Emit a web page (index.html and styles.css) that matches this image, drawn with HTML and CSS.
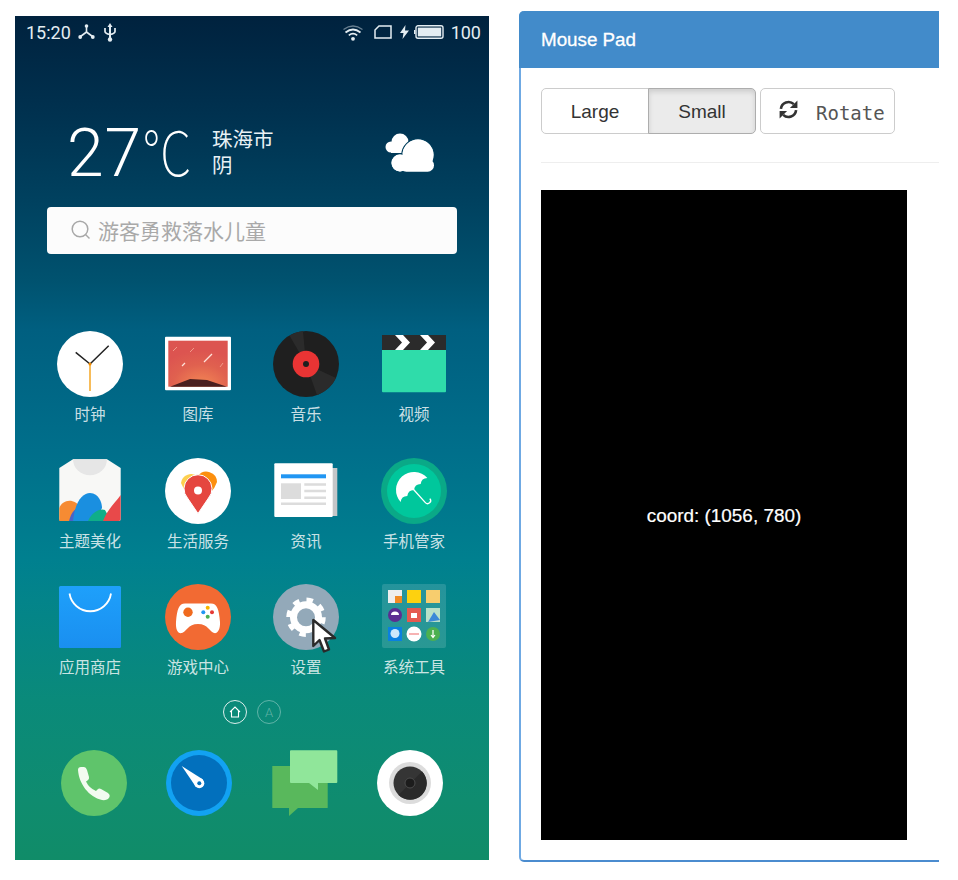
FILE: index.html
```html
<!DOCTYPE html>
<html>
<head>
<meta charset="UTF-8">
<title>Mouse Pad</title>
<link rel="stylesheet" href="styles.css">
</head>
<body>
<div class="phone">
  <div class="status">
    <div class="status-group">
      <span class="status-time">15:20</span>
      <svg class="st-node" viewBox="0 0 17 16"><path d="M8.5 2V8L2.5 12.5M8.5 8L14.5 12.5" fill="none" stroke="#e4edf2" stroke-width="1.6"/><circle cx="8.5" cy="2" r="1.8" fill="#e4edf2"/><circle cx="2.2" cy="13" r="1.9" fill="#e4edf2"/><circle cx="14.8" cy="13" r="1.9" fill="#e4edf2"/></svg>
      <svg class="st-usb" viewBox="0 0 14 19"><path d="M7 0L9.5 4H8V15.5H6V4H4.500Z" fill="#e4edf2"/><path d="M2 5V8.500Q2 10.500 7 11.500Q12 10.500 12 8.500V5" fill="none" stroke="#e4edf2" stroke-width="1.7"/><circle cx="7" cy="16.500" r="2.200" fill="#e4edf2"/></svg>
    </div>
    <div class="status-group">
      <svg class="st-wifi" viewBox="0 0 20 17"><path d="M.5 5.500Q10 -1.500 19.500 5.500" fill="none" stroke="#e4edf2" stroke-width="1.300" opacity=".45"/><path d="M2.500 8.500Q10 2.500 17.500 8.500" fill="none" stroke="#e4edf2" stroke-width="1.700"/><path d="M5.800 11.300Q10 8 14.200 11.300" fill="none" stroke="#e4edf2" stroke-width="1.700"/><circle cx="10" cy="14.800" r="1.900" fill="#e4edf2"/></svg>
      <svg class="st-sim" viewBox="0 0 18 14"><path d="M1 13V5L5 1H17V13Z" fill="none" stroke="#e4edf2" stroke-width="1.500"/></svg>
      <svg class="st-bolt" viewBox="0 0 9 14"><path d="M5.500 0L0 8H3.500L2.500 14L9 5.500H5Z" fill="#e4edf2"/></svg>
      <svg class="st-batt" viewBox="0 0 30 14"><rect x="2" y=".8" width="27" height="12.400" rx="2" fill="none" stroke="#e4edf2" stroke-width="1.400"/><rect x="3.800" y="2.600" width="23.400" height="8.800" fill="#e4edf2"/><rect x="0" y="5" width="1.400" height="4" fill="#e4edf2"/></svg>
      <span class="status-num">100</span>
    </div>
  </div>

  <div class="weather">
    <div class="temp">27<span class="temp-c">℃</span></div>
    <div class="city">珠海市<br>阴</div>
    <svg class="cloud" viewBox="0 0 50 40">
      <circle cx="15" cy="9" r="8.500" fill="#fff"/><circle cx="6" cy="14" r="5.500" fill="#fff"/><rect x="6" y="11" width="18" height="9" fill="#fff"/>
      <g fill="#fff" stroke="#003e5c" stroke-width="2.500" paint-order="stroke"><circle cx="33" cy="22" r="15.500"/><circle cx="15" cy="30" r="8.500"/></g>
      <circle cx="33" cy="22" r="15.500" fill="#fff"/><circle cx="15" cy="30" r="8.500" fill="#fff"/><rect x="15" y="26" width="34" height="12.700" rx="6.300" fill="#fff"/>
    </svg>
  </div>

  <div class="search">
    <svg class="search-icon" viewBox="0 0 20 20"><circle cx="9" cy="9" r="7.800" fill="none" stroke="#a8a8a8" stroke-width="1.500"/><path d="M14.500 14.500L18.500 18.500" stroke="#a8a8a8" stroke-width="1.500"/></svg>
    <span>游客勇救落水儿童</span>
  </div>

  <div class="apps">
    <div class="app">
      <svg class="icon" viewBox="0 0 66 66"><circle cx="33" cy="33" r="33" fill="#fff"/><path d="M33 33L18.700 21.300M33 33L51.700 14.700" stroke="#222" stroke-width="1.500"/><path d="M33 33V60" stroke="#f5a623" stroke-width="1.500"/><circle cx="33" cy="33" r="1.500" fill="#f08a00"/></svg>
      <span class="label">时钟</span>
    </div>
    <div class="app">
      <svg class="icon" viewBox="0 0 66 66"><defs><radialGradient id="sky" cx=".55" cy="1" r=".8"><stop offset="0" stop-color="#f58a55"/><stop offset=".6" stop-color="#e0614f"/><stop offset="1" stop-color="#dc5450"/></radialGradient></defs><rect y="5.700" width="66" height="53.600" rx="1" fill="#fff"/><rect x="3.300" y="9.700" width="59.400" height="46" fill="url(#sky)"/><path d="M5 55.700L25 48L42 49L62 55.700Z" fill="#4a1f1f"/><path d="M39 31L47 23M17 35L20 32" stroke="#ffe3da" stroke-width="1.300"/><path d="M8 20L12 16M25 21L29 17M55 36L58 32" stroke="#f29a8a" stroke-width="1"/></svg>
      <span class="label">图库</span>
    </div>
    <div class="app">
      <svg class="icon" viewBox="0 0 66 66"><circle cx="33" cy="33" r="33" fill="#1f1f1f"/><path d="M33 33L16.500 4.400A33 33 0 0 1 30 0ZM33 33L63 47A33 33 0 0 1 44 64Z" fill="#2b2b2b"/><circle cx="33" cy="33" r="13.300" fill="#e93434"/><circle cx="33" cy="33" r="3" fill="#1f1f1f"/></svg>
      <span class="label">音乐</span>
    </div>
    <div class="app">
      <svg class="icon" viewBox="0 0 66 66"><rect x="1" y="4" width="64" height="15" fill="#2b2b2b"/><path d="M14 4H22L29 11.500L22 19H14L21 11.500ZM39 4H47L54 11.500L47 19H39L46 11.500Z" fill="#fff"/><path d="M1 19H65V60.300Q65 61.300 64 61.300H2Q1 61.300 1 60.300Z" fill="#2fdcaa"/></svg>
      <span class="label">视频</span>
    </div>

    <div class="app">
      <svg class="icon" viewBox="0 0 66 66"><path d="M16 1.300H50L63.700 10V61Q63.700 63 61.700 63H4.300Q2.300 63 2.300 61V10Z" fill="#f8f8f6"/><path d="M16 1.300A17 16 0 0 0 50 1.300Z" fill="#e6e6e6"/><path d="M2.300 63V50C5 42 17 39 24 50V63Z" fill="#f68b33"/><path d="M12 63C14 55 18 50 22 50L30 63Z" fill="#4a63c8"/><path d="M16 63C18 43 26 35 33 35C42 35 45 45 45 50L38 63Z" fill="#1a8fe0"/><path d="M31 63C35 54 43 50 48 52L54 63Z" fill="#0fae88"/><path d="M46 63C50 52 58 45 63.700 37V61Q63.700 63 61.700 63Z" fill="#e8494a"/></svg>
      <span class="label">主题美化</span>
    </div>
    <div class="app">
      <svg class="icon" viewBox="0 0 66 66"><circle cx="33" cy="33" r="33" fill="#fff"/><path d="M16 25A10 10 0 0 1 33 19L33 44Q20 36 16 25Z" fill="#fdd04f"/><path d="M52 24A10.500 10.500 0 0 0 33 18L33 44Q48 36 52 24Z" fill="#fc8f0e"/><path d="M33 55.500L22.500 40A14 14 0 1 1 43.500 40Z" fill="#e5463f" stroke="#fff" stroke-width="1"/><circle cx="33" cy="32.500" r="4" fill="#fff"/></svg>
      <span class="label">生活服务</span>
    </div>
    <div class="app">
      <svg class="icon" viewBox="0 0 66 66"><rect x="58" y="10" width="6.300" height="48" fill="#c4c6c8"/><rect x="1.300" y="5.300" width="58.400" height="53.700" rx="1" fill="#fff"/><rect x="8" y="16.300" width="45" height="4" fill="#2196f3"/><rect x="8" y="25.300" width="20" height="15.700" fill="#dcdcdc"/><path d="M31.300 26.500H53M31.300 33H53M31.300 39.800H53M8 45.700H53" stroke="#dcdcdc" stroke-width="2.400"/></svg>
      <span class="label">资讯</span>
    </div>
    <div class="app">
      <svg class="icon" viewBox="0 0 66 66"><circle cx="33" cy="33" r="33" fill="#0aa987"/><circle cx="33" cy="33" r="27" fill="#00c79c"/><g transform="rotate(-42 33 32)"><path d="M15 32A18 18 0 0 1 51 32Q46.500 28 42 32Q37.500 28 33 32Q28.500 28 24 32Q19.500 28 15 32Z" fill="#fff"/><path d="M33 31V49A3 3 0 0 0 39 49" fill="none" stroke="#fff" stroke-width="1.300"/></g></svg>
      <span class="label">手机管家</span>
    </div>

    <div class="app">
      <svg class="icon" viewBox="0 0 66 66"><defs><linearGradient id="bag" x1="0" y1="0" x2="0" y2="1"><stop offset="0" stop-color="#1ea0fb"/><stop offset="1" stop-color="#1a8ff0"/></linearGradient></defs><rect x="2" y="2" width="62" height="62" rx="1.500" fill="url(#bag)"/><path d="M12.500 9.500A21 21 0 0 0 54 9.500" fill="none" stroke="#fff" stroke-width="1.800"/></svg>
      <span class="label">应用商店</span>
    </div>
    <div class="app">
      <svg class="icon" viewBox="0 0 66 66"><circle cx="33" cy="33" r="33" fill="#f26a33"/><path d="M20 19.500H46C52 19.500 54 25 55 38C55.500 46 52 50 49 49C45 48 43 40 33 40C23 40 21 48 17 49C13 50 10.500 46 11 38C12 25 14 19.500 20 19.500Z" fill="#fff"/><circle cx="23" cy="28.300" r="4.700" fill="#f06a1e"/><circle cx="38.300" cy="28.300" r="2" fill="#2196f3"/><circle cx="42.700" cy="23.700" r="2" fill="#f7b500"/><circle cx="47" cy="28.300" r="2" fill="#e53935"/><circle cx="42.700" cy="32.700" r="2" fill="#4caf50"/></svg>
      <span class="label">游戏中心</span>
    </div>
    <div class="app">
      <svg class="icon" viewBox="0 0 66 66"><circle cx="33" cy="33" r="33" fill="#93a9b9"/><circle cx="33" cy="33.300" r="17.500" fill="none" stroke="#fff" stroke-width="4.500" stroke-dasharray="6.500 7.240"/><circle cx="33" cy="33.300" r="16" fill="#fff"/><circle cx="33" cy="33.300" r="9" fill="#93a9b9"/><path d="M40.300 36L40.300 62L46.500 56L51 67.500L56 65.500L52 54.500L62 54Z" fill="#fff" stroke="#2a2a2a" stroke-width="2.400" stroke-linejoin="round"/></svg>
      <span class="label">设置</span>
    </div>
    <div class="app">
      <svg class="icon" viewBox="0 0 66 66"><rect x="1" y="0" width="64" height="64" rx="2" fill="#fff" fill-opacity=".14"/><rect x="7" y="6" width="14" height="13" fill="#eee"/><rect x="14" y="12" width="7" height="7" fill="#f08a24"/><path d="M26 6H40V19H26Z" fill="#fdd10f"/><rect x="45" y="6" width="14" height="13" fill="#f7cd6e"/><circle cx="14" cy="31" r="7" fill="#5c2d91"/><path d="M10 31A4 3.500 0 0 1 18 31Z" fill="#fff"/><rect x="26" y="24" width="14" height="14" fill="#e55a50"/><rect x="30" y="29" width="6" height="5" fill="#fff"/><rect x="45" y="24" width="14" height="14" fill="#b8e0c8"/><path d="M47 38L53 28L59 36Z" fill="#3b88d8"/><rect x="7" y="43" width="14" height="14" fill="#0a80e0"/><circle cx="14" cy="49.500" r="4.500" fill="#cde8fb"/><circle cx="33" cy="50" r="7.500" fill="#fff"/><path d="M28 50H38" stroke="#f39a9a" stroke-width="1.500"/><circle cx="52" cy="50" r="7" fill="#4cb050"/><path d="M52 46V53M50 51L52 53.500L54 51" fill="none" stroke="#fff" stroke-width="1.200"/></svg>
      <span class="label">系统工具</span>
    </div>
  </div>

  <div class="pages">
    <div class="page page-on"><svg class="home-icon" viewBox="0 0 12 12"><path d="M1 6L6 1L11 6M2.500 5V11H9.500V5" fill="none" stroke="#fff" stroke-width="1.100"/></svg></div>
    <div class="page page-off">A</div>
  </div>

  <div class="dock">
    <svg class="icon" viewBox="0 0 66 66"><circle cx="33" cy="33" r="33" fill="#5fc46b"/><path d="M17 20Q17 17 20 17L23 17Q25 17 26 20L28 27Q28.500 29.500 26.500 30.500L25 31.500Q28 38 35 41L36.500 39.500Q38 38 40 39L47 43Q49.500 45 48.500 47L47 49Q45 50.500 41 50C28 47 18 34 17 20Z" fill="#f2fbf0"/></svg>
    <svg class="icon" viewBox="0 0 66 66"><circle cx="33" cy="33" r="33" fill="#12a2f2"/><circle cx="33" cy="33" r="28" fill="#0270bd"/><path d="M15.700 16L37 29.500L30 37Z" fill="#fff"/><circle cx="33.300" cy="33.300" r="5" fill="#fff"/><circle cx="33.300" cy="33.300" r="2" fill="#0270bd"/></svg>
    <svg class="icon" viewBox="0 0 66 66"><path d="M.3 16H55.700V57.500Q55.700 58 55 58H26L17 66V58H.8Q.3 58 .3 57.500Z" fill="#59b85c"/><path d="M18 1Q18 .3 19 .3H64.300Q65.300 .3 65.300 1.300V32Q65.300 33 64.300 33H46V40L37 33H19Q18 33 18 32Z" fill="#90e69a"/></svg>
    <svg class="icon" viewBox="0 0 66 66"><circle cx="33" cy="33" r="33" fill="#fff"/><circle cx="33" cy="33" r="21" fill="#dcdcdc"/><circle cx="33" cy="33" r="16.500" fill="#353535"/><path d="M21.500 45L45 21.500A16.500 16.500 0 0 1 21.500 45Z" fill="#2a2a2a"/><circle cx="33" cy="33" r="5" fill="#1c1c1c" stroke="#4c4c4c"/></svg>
  </div>
</div>

<div class="panel">
  <div class="panel-head">Mouse Pad</div>
  <div class="panel-body">
    <div class="toolbar">
      <div class="btn-group">
        <button class="btn btn-left">Large</button>
        <button class="btn btn-right active">Small</button>
      </div>
      <button class="btn btn-rotate">
        <svg class="refresh" viewBox="1 1 16 16"><path d="M2.600 8.500A6.500 6.500 0 0 1 13.500 4.500M15.400 9.500A6.500 6.500 0 0 1 4.500 13.500" fill="none" stroke="#333" stroke-width="2.200"/><path d="M16.500 1.500V7.800H10.200ZM1.500 16.500V10.200H7.800Z" fill="#333"/></svg>
        <span class="mono">Rotate</span>
      </button>
    </div>
    <div class="rule"></div>
    <div class="pad">coord: (1056, 780)</div>
  </div>
</div>
</body>
</html>
```

FILE: styles.css
```css
body {margin:0; display:flex; align-items:flex-start; background:#fff; height:880px; overflow:hidden; font-family:"Liberation Sans", sans-serif;}

.phone {width:474px; height:844px; margin:16px 0 0 15px; flex:none; color:#fff; overflow:hidden;
  font-family:Roboto, "Noto Sans CJK SC", sans-serif;
  background:linear-gradient(180deg, #00223e 0, #002f4d 84px, #00415f 184px, #00526f 264px, #005f80 314px, #006f8b 434px, #00808f 544px, #03848a 584px, #0a8a7a 684px, #0f8c6f 784px, #108c68 844px);}

.status {height:32px; display:flex; justify-content:space-between; align-items:center; padding:0 8px 0 11px;}
.status-group {display:flex; align-items:center;}
.status-time {font-size:18px; color:#e4edf2; width:52px;}
.status-num {font-size:18px; color:#e4edf2; margin-left:7px;}
.st-node {width:17px; height:16px; margin-right:8px;}
.st-usb {width:14px; height:19px;}
.st-wifi {width:20px; height:17px; margin-right:11px;}
.st-sim {width:18px; height:14px; margin-right:8px;}
.st-bolt {width:9px; height:14px; margin-right:5px;}
.st-batt {width:30px; height:14px;}

.weather {height:64px; margin-top:72px; padding-left:52px; display:flex; align-items:center;}
.temp {font-size:66px; letter-spacing:1px; font-weight:300; line-height:64px; width:139px; white-space:nowrap;}
.temp-c {display:inline-block; font:100 61px/64px "Noto Sans CJK SC", sans-serif; letter-spacing:0; transform:scaleX(.82); transform-origin:left center;}
.city {font-size:20.500px; line-height:26px; color:#e9f1f5; font-family:"Noto Sans CJK SC", sans-serif; margin:-3px 0 0 6px;}
.cloud {width:50px; height:40px; margin-left:auto; margin-right:54px; margin-top:2px;}

.search {width:410px; height:47px; margin:23px 0 0 32px; background:#fcfcfc; border-radius:4px; display:flex; align-items:center; padding:0 0 2px 24px; box-sizing:border-box;
  font:21px "Noto Sans CJK SC", sans-serif; color:#a9a9a9;}
.search-icon {width:20px; height:20px; margin-right:7px;}

.apps {display:grid; grid-template-columns:repeat(4, 108px); grid-template-rows:127px 126px 116px; margin:77px 0 0 21px;}
.app {display:flex; flex-direction:column; align-items:center;}
.icon {width:66px; height:66px; display:block; flex:none; overflow:visible;}
.label {margin-top:5px; font:15.500px/22px "Noto Sans CJK SC", sans-serif; color:rgba(255,255,255,.8);}

.pages {display:flex; justify-content:center; gap:10px;}
.page {width:24px; height:24px; border-radius:50%; box-sizing:border-box; display:flex; align-items:center; justify-content:center;}
.page-on {border:1.500px solid rgba(255,255,255,.85);}
.page-off {border:1.500px solid rgba(255,255,255,.35); color:rgba(255,255,255,.35); font:300 13px Roboto, sans-serif;}
.home-icon {width:12px; height:12px;}

.dock {display:flex; gap:39.300px; margin-top:26px; padding-left:46px;}

.panel {width:420px; height:851px; margin:11px 0 0 30px; flex:none; box-sizing:border-box; border-left:2px solid #6fa9e3; border-bottom:2px solid #4b8ccf; border-radius:5px 0 0 5px;}
.panel-head {height:57px; margin-left:-2px; padding-left:22px; background:#428bca; color:#fff; font-size:18.800px; line-height:57px; border-radius:5px 0 0 0; -webkit-text-stroke:.3px #fff;}
.panel-body {padding:20px 0 0 20px;}
.toolbar {display:flex; gap:4px;}
.btn-group {display:flex;}
.btn {height:46px; background:#fff; border:1px solid #ccc; color:#333; font:19px "Liberation Sans", sans-serif; padding:2px 0 0; box-sizing:border-box;}
.btn-left {width:108px; border-radius:5px 0 0 5px;}
.btn-right {width:108px; margin-left:-1px; border-radius:0 5px 5px 0;}
.active {background:#ebebeb; border-color:#adadad; box-shadow:inset 0 3px 5px rgba(0,0,0,.125);}
.btn-rotate {width:135px; border-radius:5px; display:flex; align-items:center; padding:0 0 0 18px;}
.refresh {width:19px; height:19px; margin:-3px 18px 0 0;}
.mono {font:19px "DejaVu Sans Mono", monospace; color:#555; margin-top:3px;}
.rule {height:1px; margin-top:28px; background:#eee;}
.pad {width:366px; height:650px; padding-top:2px; margin-top:27px; box-sizing:border-box; background:#000; color:#fff; font-size:18.900px; -webkit-text-stroke:.2px #fff; display:flex; align-items:center; justify-content:center;}
```
